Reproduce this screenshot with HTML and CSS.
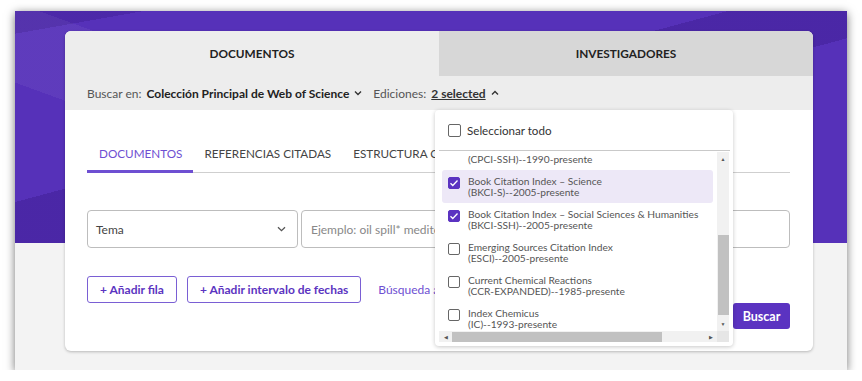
FILE: index.html
```html
<!DOCTYPE html>
<html lang="es">
<head>
    <meta charset="UTF-8">
    <meta name="viewport" content="width=device-width, initial-scale=1.0">
    <title>Buscar documentos</title>
    <link rel="stylesheet" href="styles.css">
</head>
<body>

    <div class="shot">
        <div class="card">
            <div class="top-tabs">
                <div class="top-tab active">DOCUMENTOS</div>
                <div class="top-tab">INVESTIGADORES</div>
            </div>

            <div class="scope">
                <span class="muted">Buscar en:</span>
                <span class="strong">Colección Principal de Web of Science</span>
                <svg class="chev" width="8" height="6" viewBox="0 0 8 6"><path d="M1 1.5l3 3 3-3" fill="none" stroke="#333" stroke-width="1.4"/></svg>
                <span class="muted ed-label">Ediciones:</span>
                <span class="selected">2 selected</span>
                <svg class="chev" width="8" height="6" viewBox="0 0 8 6"><path d="M1 4.5l3-3 3 3" fill="none" stroke="#333" stroke-width="1.4"/></svg>
            </div>

            <div class="card-body">
                <div class="subtabs">
                    <div class="subtab active">DOCUMENTOS</div>
                    <div class="subtab">REFERENCIAS CITADAS</div>
                    <div class="subtab">ESTRUCTURA QUÍMICA</div>
                </div>

                <div class="query-row">
                    <div class="field-select">
                        <span>Tema</span>
                        <svg width="9" height="6" viewBox="0 0 9 6"><path d="M1 1.2l3.5 3.5 3.5-3.5" fill="none" stroke="#555" stroke-width="1.3"/></svg>
                    </div>
                    <div class="field-input">Ejemplo: oil spill* mediterranean</div>
                </div>

                <div class="actions">
                    <button class="outline">+ Añadir fila</button>
                    <button class="outline">+ Añadir intervalo de fechas</button>
                    <a class="link" href="#">Búsqueda avanzada</a>
                </div>

                <div class="submit-row">
                    <button class="primary">Buscar</button>
                </div>
            </div>

            <!-- editions menu, open -->
            <div class="editions">
                <div class="select-all">
                    <span class="cb"></span>
                    <span>Seleccionar todo</span>
                </div>
                <div class="list-wrap">
                    <div class="list-main">
                        <div class="list-view">
                            <div class="list-items">
                                <div class="item">
                                    <span class="cb"></span>
                                    <div class="item-text">
                                        <div>Conference Proceedings Citation Index – Social Science &amp; Humanities</div>
                                        <div>(CPCI-SSH)--1990-presente</div>
                                    </div>
                                </div>
                                <div class="item hover">
                                    <span class="cb checked"></span>
                                    <div class="item-text">
                                        <div>Book Citation Index – Science</div>
                                        <div>(BKCI-S)--2005-presente</div>
                                    </div>
                                </div>
                                <div class="item">
                                    <span class="cb checked"></span>
                                    <div class="item-text">
                                        <div>Book Citation Index – Social Sciences &amp; Humanities</div>
                                        <div>(BKCI-SSH)--2005-presente</div>
                                    </div>
                                </div>
                                <div class="item">
                                    <span class="cb"></span>
                                    <div class="item-text">
                                        <div>Emerging Sources Citation Index</div>
                                        <div>(ESCI)--2005-presente</div>
                                    </div>
                                </div>
                                <div class="item">
                                    <span class="cb"></span>
                                    <div class="item-text">
                                        <div>Current Chemical Reactions</div>
                                        <div>(CCR-EXPANDED)--1985-presente</div>
                                    </div>
                                </div>
                                <div class="item">
                                    <span class="cb"></span>
                                    <div class="item-text">
                                        <div>Index Chemicus</div>
                                        <div>(IC)--1993-presente</div>
                                    </div>
                                </div>
                            </div>
                        </div>
                        <div class="vbar">
                            <span class="arrow">&#9650;</span>
                            <span class="vthumb"></span>
                            <span class="arrow down">&#9660;</span>
                        </div>
                    </div>
                    <div class="hbar">
                        <span class="arrow">&#9664;</span>
                        <span class="hthumb"></span>
                        <span class="arrow right">&#9654;</span>
                        <span class="corner"></span>
                    </div>
                </div>
            </div>
        </div>
    </div>

</body>
</html>
```

FILE: styles.css
```css
body {
    margin: 0;
    background: #fff;
    font-family: Lato, "Open Sans", sans-serif;
}
.shot {
    margin: 11px 0 0 15px;
    width: 832px;
    height: 359px;
    overflow: hidden;
    position: relative;
    box-shadow: 0 2px 9px rgba(0, 0, 0, 0.55);
    background-color: #f3f3f3;
    background-image:
        linear-gradient(165deg, transparent 0 42%, rgba(40, 10, 110, 0.25) 42% 55%, transparent 55%),
        linear-gradient(20deg, transparent 0 30%, rgba(255, 255, 255, 0.05) 30% 45%, transparent 45%),
        linear-gradient(170deg, rgba(40, 10, 110, 0.22) 0 6%, transparent 6%),
        linear-gradient(#5631b9, #5631b9);
    background-size: 100% 232px;
    background-repeat: no-repeat;
    padding-top: 20px;
    box-sizing: border-box;
}
.card {
    position: relative;
    margin-left: 50px;
    width: 748px;
    height: 320px;
    background: #fff;
    border-radius: 6px;
    box-shadow: 0 1px 3px rgba(0, 0, 0, 0.25);
}
.top-tabs {
    display: flex;
    height: 45px;
}
.top-tab {
    flex: 1;
    display: flex;
    align-items: center;
    justify-content: center;
    font-size: 11.8px;
    font-weight: bold;
    color: #222;
    background: #d7d7d7;
    border-top-right-radius: 6px;
}
.top-tab.active {
    flex: 0 0 374px;
    background: #ededed;
    border-radius: 6px 0 0 0;
}
.scope {
    height: 34px;
    background: #ededed;
    display: flex;
    align-items: center;
    padding-left: 22px;
    font-size: 12px;
    color: #222;
}
.muted {
    color: #555;
    margin-right: 5px;
}
.strong {
    font-weight: bold;
    margin-right: 5px;
}
.ed-label {
    margin-left: 11px;
}
.selected {
    font-weight: bold;
    color: #333;
    text-decoration: underline;
    margin-right: 5px;
}
.card-body {
    padding: 0 23px 0 22px;
}
.subtabs {
    display: flex;
    margin-top: 25px;
    border-bottom: 1px solid #cfcfcf;
}
.subtab {
    height: 35px;
    display: flex;
    align-items: center;
    padding: 0 11px;
    margin-bottom: -1px;
    border-bottom: 3px solid transparent;
    font-size: 11.7px;
    color: #444;
}
.subtab.active {
    padding: 0 11px 0 12px;
    color: #6e4fd2;
    border-bottom-color: #6e4fd2;
}
.query-row {
    display: flex;
    gap: 3px;
    margin-top: 37px;
    height: 38px;
}
.field-select {
    width: 211px;
    box-sizing: border-box;
    border: 1px solid #bdbdbd;
    border-radius: 4px;
    display: flex;
    align-items: center;
    justify-content: space-between;
    padding: 0 11px 0 8px;
    font-size: 12px;
    color: #444;
}
.field-input {
    flex: 1;
    box-sizing: border-box;
    border: 1px solid #bdbdbd;
    border-radius: 4px;
    display: flex;
    align-items: center;
    padding-left: 9px;
    font-size: 12px;
    color: #888;
}
.actions {
    display: flex;
    align-items: center;
    gap: 10px;
    margin-top: 28px;
}
.outline {
    height: 27px;
    padding: 0 12px;
    background: #fff;
    border: 1px solid #7a5fd4;
    border-radius: 3px;
    color: #5b34c1;
    font-family: inherit;
    font-size: 12px;
    font-weight: bold;
}
.link {
    margin-left: 7px;
    color: #6e4fd2;
    font-size: 12px;
    text-decoration: none;
}
.submit-row {
    display: flex;
    justify-content: flex-end;
    margin-top: 0;
}
.primary {
    width: 57px;
    height: 26px;
    border: none;
    border-radius: 3px;
    background: #5b33c1;
    color: #fff;
    font-family: inherit;
    font-size: 12.5px;
    font-weight: bold;
}

/* editions menu */
.editions {
    position: absolute;
    left: 370px;
    top: 79px;
    width: 298px;
    height: 236px;
    background: #fff;
    border-radius: 4px;
    box-shadow: 0 1px 4px rgba(0, 0, 0, 0.22);
    display: flex;
    flex-direction: column;
}
.select-all {
    height: 40px;
    margin: 0 3px 0 4px;
    padding-left: 9px;
    display: flex;
    align-items: center;
    gap: 6px;
    border-bottom: 1px solid #c9c9c9;
    font-size: 11.6px;
    color: #333;
}
.cb {
    flex: 0 0 auto;
    width: 12px;
    height: 12px;
    border: 1.5px solid #666;
    border-radius: 2px;
    background: #fff;
    box-sizing: border-box;
}
.select-all .cb {
    width: 13px;
    height: 13px;
}
.cb.checked {
    border-color: #5b33c1;
    background: #5b33c1 url("data:image/svg+xml,%3Csvg xmlns='http://www.w3.org/2000/svg' viewBox='0 0 12 12'%3E%3Cpath d='M2.5 6.2l2.3 2.3 4.7-5' fill='none' stroke='white' stroke-width='1.3'/%3E%3C/svg%3E") center / 12px 12px no-repeat;
}
.list-wrap {
    margin: 1px 4px 0;
    height: 190px;
    display: flex;
    flex-direction: column;
}
.list-main {
    display: flex;
    height: 179px;
}
.list-view {
    flex: 1;
    margin-top: 4px;
    overflow: hidden;
}
.list-items {
    margin-top: -19px;
}
.item {
    height: 33px;
    margin: 0 4px 0 3px;
    padding: 7px 0 0 6px;
    box-sizing: border-box;
    display: flex;
    align-items: flex-start;
    gap: 8px;
    border-radius: 3px;
}
.item.hover {
    background: #ede8f7;
}
.item-text {
    font-size: 10.2px;
    line-height: 11px;
    color: #555;
    white-space: nowrap;
    margin-top: -1px;
}
.vbar {
    width: 12px;
    background: #f1f1f1;
    display: flex;
    flex-direction: column;
    align-items: center;
}
.arrow {
    font-size: 5px;
    color: #555;
    height: 14px;
    display: flex;
    align-items: center;
    justify-content: center;
}
.vthumb {
    width: 11px;
    height: 80px;
    margin-top: 69px;
    background: #c1c1c1;
}
.arrow.down {
    margin-top: auto;
}
.hbar {
    height: 11px;
    display: flex;
    align-items: center;
    background: #f1f1f1;
}
.hbar .arrow {
    width: 13px;
    height: 11px;
}
.hthumb {
    width: 210px;
    height: 10px;
    background: #c1c1c1;
}
.arrow.right {
    margin-left: auto;
}
.corner {
    width: 12px;
    height: 11px;
    background: #e6e6e6;
}
```
